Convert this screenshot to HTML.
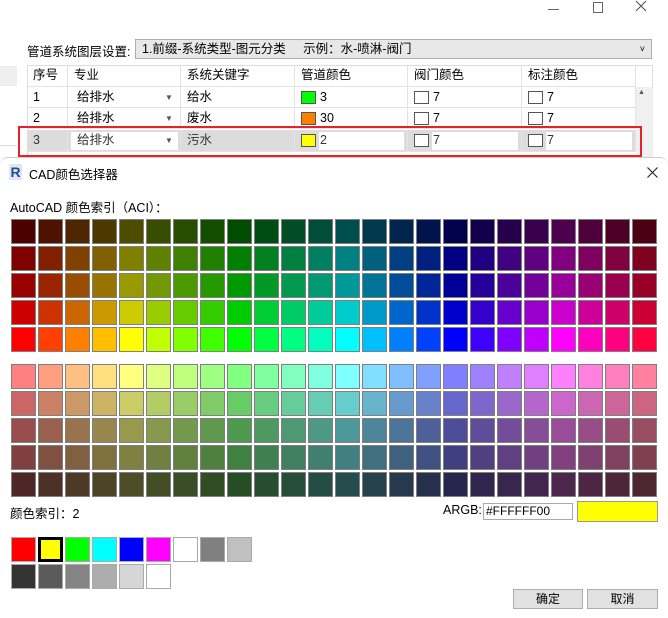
<!DOCTYPE html>
<html><head><meta charset="utf-8">
<style>
*{box-sizing:border-box;margin:0;padding:0}
body{width:668px;height:618px;background:#fff;position:relative;overflow:hidden;font-family:"Liberation Sans","Noto Sans CJK SC",sans-serif;font-size:12px;color:#000}
.a{position:absolute}
.cell{position:absolute;width:25px;height:25px;border:1px solid #808080}
.tb{position:absolute;border-right:1px solid #e3e3e3;border-bottom:1px solid #e3e3e3;padding-left:6px;line-height:21px;white-space:nowrap}
.sw{position:absolute;left:6px;top:4px;width:15px;height:13px;border:1px solid #555}
.num{position:absolute;left:25px;top:0}
.wb{position:absolute;top:2px;height:18px;background:#fff}
.btn{position:absolute;height:20px;background:#e1e1e1;border:1px solid #adadad;text-align:center;line-height:18px}
</style></head><body>
<div class="a" style="left:548px;top:9px;width:11px;height:1px;background:#666"></div>
<div class="a" style="left:593px;top:2px;width:10px;height:11px;border:1px solid #666"></div>
<svg class="a" style="left:635px;top:0" width="12" height="12"><path d="M1 1L11 11M11 1L1 11" stroke="#555" stroke-width="1.1"/></svg>

<div class="a" style="left:27px;top:41px;font-size:12.5px">管道系统图层设置:</div>
<div class="a" style="left:135px;top:39px;width:517px;height:20px;border:1px solid #adadad;background:#e8e8e8;padding-left:6px;line-height:18px;font-size:12.5px">1.前缀-系统类型-图元分类&nbsp;&nbsp;&nbsp;&nbsp;&nbsp;示例：水-喷淋-阀门<span style="position:absolute;right:6px;font-size:9px">˅</span></div>

<div class="a" style="left:0;top:66px;width:17px;height:80px;background:#fff;border-bottom:1px solid #ddd"></div>
<div class="a" style="left:0;top:66px;width:17px;height:20px;background:#efefef"></div>
<div class="a" style="left:27px;top:65px;width:626px;height:92px;border:1px solid #ddd;background:#fff"></div>
<div class="a" style="left:636px;top:87px;width:17px;height:70px;background:#f0f0f0"></div>
<div class="a" style="left:638px;top:89px;font-size:7px;color:#555">▲</div>

<div id="tbl"></div>

<div class="a" style="left:18px;top:126px;width:624px;height:31px;border:2px solid #e8202a"></div>

<div class="a" style="left:0;top:157px;width:668px;height:461px;background:#fff;border-top:1px solid #ccc;border-radius:8px 8px 0 0"></div>
<div class="a" style="left:9px;top:164px;width:13px;height:16px;background:#dde6f2;color:#1f4f8f;font-weight:bold;font-size:14px;line-height:16px;text-align:center">R</div>
<div class="a" style="left:29px;top:164px;font-size:12.5px">CAD颜色选择器</div>
<svg class="a" style="left:647px;top:167px" width="11" height="11"><path d="M0.5 0.5L10.5 10.5M10.5 0.5L0.5 10.5" stroke="#222" stroke-width="1.1"/></svg>
<div class="a" style="left:10px;top:197px;font-size:12.5px">AutoCAD 颜色索引（ACI）：</div>

<div id="grid"></div>

<div class="a" style="left:10px;top:503px;font-size:12.5px">颜色索引：2</div>
<div class="a" style="left:443px;top:503px;font-size:12.5px">ARGB:</div>
<div class="a" style="left:483px;top:503px;width:90px;height:17px;border:1px solid #aaa;padding-left:2px;line-height:15px;font-size:12px">#FFFFFF00</div>
<div class="a" style="left:577px;top:501px;width:81px;height:21px;background:#ffff00;border:1px solid #999"></div>

<div id="std"></div>

<div class="btn" style="left:513px;top:589px;width:70px">确定</div>
<div class="btn" style="left:587px;top:589px;width:71px">取消</div>

<script>
var h='';
function hsv(hh,s,v){hh=hh%360;var c=v*s,x=c*(1-Math.abs((hh/60)%2-1)),m=v-c,r,g,b;
if(hh<60){r=c;g=x;b=0}else if(hh<120){r=x;g=c;b=0}else if(hh<180){r=0;g=c;b=x}else if(hh<240){r=0;g=x;b=c}else if(hh<300){r=x;g=0;b=c}else{r=c;g=0;b=x}
return 'rgb('+Math.round((r+m)*255)+','+Math.round((g+m)*255)+','+Math.round((b+m)*255)+')';}
var v1=[0.3,0.5,0.6,0.8,1],v2=[1,0.8,0.6,0.5,0.3];
for(var i=0;i<24;i++){var x=11+27*i;
for(var r=0;r<5;r++){h+='<div class="cell" style="left:'+x+'px;top:'+(219+27*r)+'px;background:'+hsv(i*15,1,v1[r])+'"></div>';
h+='<div class="cell" style="left:'+x+'px;top:'+(364+27*r)+'px;background:'+hsv(i*15,0.5,v2[r])+'"></div>';}}
document.getElementById('grid').innerHTML=h;
var s1=['#f00','#ff0','#0f0','#0ff','#00f','#f0f','#fff','#808080','#c0c0c0'],s2=['#333','#5b5b5b','#848484','#adadad','#d6d6d6','#fff'];
h='';
s1.forEach(function(c,i){h+='<div class="cell" style="left:'+(11+27*i)+'px;top:537px;background:'+c+';'+(i==1?'border:3px solid #000':'border-color:#aaa')+'"></div>'});
s2.forEach(function(c,i){h+='<div class="cell" style="left:'+(11+27*i)+'px;top:564px;background:'+c+';border-color:#aaa"></div>'});
document.getElementById('std').innerHTML=h;
var cols=[27,68,181,295,408,522,636],rows=[65,87,108,130],hd=['序号','专业','系统关键字','管道颜色','阀门颜色','标注颜色'];
var data=[['1','给排水','给水',['#0f0','3'],['#fff','7'],['#fff','7']],['2','给排水','废水',['#ff7f00','30'],['#fff','7'],['#fff','7']],['3','给排水','污水',['#ff0','2'],['#fff','7'],['#fff','7']]];
h='';
for(var c=0;c<6;c++)h+='<div class="tb" style="left:'+cols[c]+'px;top:65px;width:'+(cols[c+1]-cols[c])+'px;height:22px;font-size:12.5px">'+hd[c]+'</div>';
for(var r=0;r<3;r++){var y=rows[r+1],hl=r==2,w;
for(var c=0;c<6;c++){var d=data[r][c],t;w=cols[c+1]-cols[c];
if(typeof d=='string'){t=d;if(c==1)t=(hl?'<span class="wb" style="left:3px;width:107px"></span>':'')+'<span style="position:absolute;left:9px;top:0">'+d+'</span><span style="position:absolute;left:97px;top:0;font-size:8px;color:#555">▼</span>';}
else t=(hl?'<span class="wb" style="left:24px;width:'+(w-28)+'px"></span>':'')+'<span class="sw" style="background:'+d[0]+'"></span><span class="num">'+d[1]+'</span>';
h+='<div class="tb" style="left:'+cols[c]+'px;top:'+y+'px;width:'+w+'px;height:'+(r==2?22:21)+'px;font-size:12.5px;'+(hl?'background:#dcdcdc;color:#333;':'')+'">'+t+'</div>';}}
document.getElementById('tbl').innerHTML=h;
</script>
</body></html>
